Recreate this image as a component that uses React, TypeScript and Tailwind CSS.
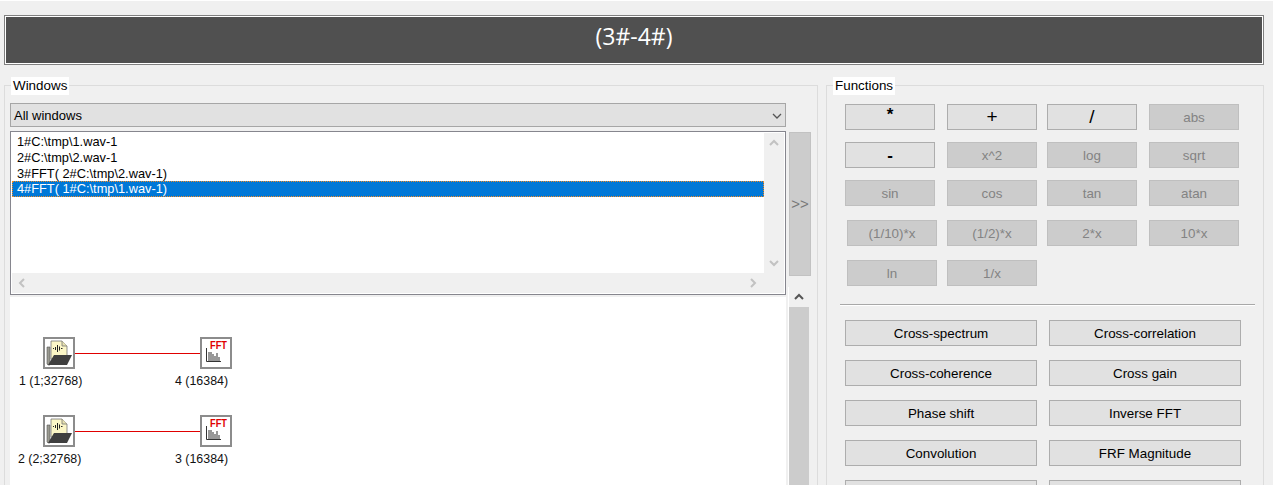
import React from "react";

type Fn = { label: string; on?: boolean; cls?: string; text?: string };

const enabledBtn = "bg-[#e1e1e1] border-[#adadad] text-black";
const disabledBtn = "bg-[#cccccc] border-[#bfbfbf] text-[#838383]";

const fnRows: { cls: string; items: Fn[] }[] = [
  {
    cls: "mt-[18px] ml-[18px]",
    items: [
      { label: "*", on: true, text: "text-[17px] font-bold pb-[4px]" },
      { label: "+", on: true, cls: "ml-[12px]", text: "text-[19px] font-light" },
      { label: "/", on: true, cls: "ml-[10px]", text: "text-[19px] pt-[1px]" },
      { label: "abs", cls: "ml-[12px] pt-[2px]" },
    ],
  },
  {
    cls: "mt-[12px] ml-[18px]",
    items: [
      { label: "-", on: true, text: "text-[17px] font-bold pt-[2px]" },
      { label: "x^2", cls: "ml-[12px] pt-[2px]" },
      { label: "log", cls: "ml-[10px] pt-[2px]" },
      { label: "sqrt", cls: "ml-[12px] pt-[2px]" },
    ],
  },
  {
    cls: "mt-[12px] ml-[18px]",
    items: [
      { label: "sin", cls: "pt-[2px]" },
      { label: "cos", cls: "ml-[12px] pt-[2px]" },
      { label: "tan", cls: "ml-[10px] pt-[2px]" },
      { label: "atan", cls: "ml-[12px] pt-[2px]" },
    ],
  },
  {
    cls: "mt-[14px] ml-[20px]",
    items: [
      { label: "(1/10)*x", cls: "pt-[2px]" },
      { label: "(1/2)*x", cls: "ml-[10px] pt-[2px]" },
      { label: "2*x", cls: "ml-[10px] pt-[2px]" },
      { label: "10*x", cls: "ml-[12px] pt-[2px]" },
    ],
  },
  {
    cls: "mt-[14px] ml-[20px]",
    items: [
      { label: "ln", cls: "pt-[2px]" },
      { label: "1/x", cls: "ml-[10px] pt-[2px]" },
    ],
  },
];

const bigRows = [
  ["Cross-spectrum", "Cross-correlation"],
  ["Cross-coherence", "Cross gain"],
  ["Phase shift", "Inverse FFT"],
  ["Convolution", "FRF Magnitude"],
  ["", ""],
];

const listRows = [
  "1#C:\\tmp\\1.wav-1",
  "2#C:\\tmp\\2.wav-1",
  "3#FFT( 2#C:\\tmp\\2.wav-1)",
  "4#FFT( 1#C:\\tmp\\1.wav-1)",
];

function Chevron({ dir, color = "#c2c2c2", w = 2 }: { dir: "up" | "down" | "left" | "right"; color?: string; w?: number }) {
  const pts = {
    up: "2,8 6,4 10,8",
    down: "2,4 6,8 10,4",
    left: "8,2 4,6 8,10",
    right: "4,2 8,6 4,10",
  }[dir];
  return (
    <svg width="12" height="12" viewBox="0 0 12 12" className="block">
      <polyline points={pts} fill="none" stroke={color} strokeWidth={w} />
    </svg>
  );
}

function FileIcon() {
  return (
    <svg width="28" height="28" viewBox="0 0 28 28" className="block">
      <path d="M2 8h3v18H3L2 25z" fill="#9a9a90" stroke="#555" strokeWidth="0.6" />
      <path d="M6 2h11l5 5v13H6z" fill="#fbf6c6" stroke="#777" strokeWidth="0.8" />
      <path d="M17 2v5h5" fill="#e8e2b0" stroke="#777" strokeWidth="0.8" />
      <path d="M8 9.500h1M10.500 8v3M12.500 6v7M14.500 7.500v4M16 9.500h1.500" stroke="#222" strokeWidth="1" fill="none" />
      <path d="M9 16h18l-5 10H3z" fill="#3f3f3f" />
    </svg>
  );
}

function FftIcon() {
  return (
    <svg width="28" height="28" viewBox="0 0 28 28" className="block">
      <text
        x="8"
        y="10"
        fontFamily="Liberation Sans, sans-serif"
        fontWeight="700"
        fontSize="11"
        textLength="17"
        lengthAdjust="spacingAndGlyphs"
        fill="#e00000"
      >
        FFT
      </text>
      <path d="M4.500 9v13.500H19" fill="none" stroke="#333" strokeWidth="1" />
      <path d="M7 13v9M9 13v9M11 15v7M13 17v5M15 14v8M17 18v4" stroke="#444" strokeWidth="1.100" />
    </svg>
  );
}

function Node({ x, y, children }: { x: number; y: number; children: React.ReactNode }) {
  return (
    <div
      className="absolute flex h-[32px] w-[32px] items-center justify-center border-2 border-[#8c8c8c] bg-white"
      style={{ left: x, top: y }}
    >
      {children}
    </div>
  );
}

function NodeLabel({ x, y, text }: { x: number; y: number; text: string }) {
  return (
    <div className="absolute whitespace-nowrap text-[12.4px] leading-[14px] text-[#111]" style={{ left: x, top: y }}>
      {text}
    </div>
  );
}

function Wire({ y }: { y: number }) {
  return <div className="absolute left-[65px] h-px w-[125px] bg-[#e00000]" style={{ top: y }} />;
}

export default function App() {
  return (
    <div
      className="mt-px h-[484px] w-[1273px] overflow-hidden bg-[#f0f0f0] text-[13.4px] text-black"
      style={{ fontFamily: '"Liberation Sans", Arial, sans-serif' }}
    >
      {/* title bar */}
      <div className="ml-[4px] mt-[14px] h-[50px] w-[1260px] border border-[#808080]">
        <div
          className="flex h-full items-center justify-center border border-white bg-[#505050] pb-[8px] text-[23px] text-white"
          style={{ fontFamily: '"Open Sans", sans-serif' }}
        >
          (3#-4#)
        </div>
      </div>

      <div className="ml-[4px] mt-[20px] flex">
        {/* Windows group */}
        <div className="relative h-[500px] w-[814px] border border-[#dcdcdc] pl-[5px] pt-[17px]">
          <div className="absolute left-[6px] top-[-9px] h-[18px] bg-white px-[2px] leading-[18px]">Windows</div>
          <div className="flex">
            <div className="w-[776px]">
              <div className="flex h-[24px] items-center justify-between border border-[#a6a6a6] bg-[#e1e1e1] pl-[3px] pr-[2px] pt-[1px] text-[13px]">
                <span>All windows</span>
                <Chevron dir="down" color="#555" w={1.3} />
              </div>

              <div className="mt-[4px] h-[164px] border border-[#86868e] bg-white p-px text-[12.8px]">
                <div className="flex h-[140px]">
                  <div className="w-[752px] pt-px leading-[16px]">
                    {listRows.map((row, i) =>
                      i === 3 ? (
                        <div key={row} className="-mt-px h-[16px] border border-dotted border-[#f08a24] bg-[#0078d7] pl-[4px] leading-[14px] text-white">
                          {row}
                        </div>
                      ) : (
                        <div key={row} className="h-[16px] pl-[5px]">
                          {row}
                        </div>
                      )
                    )}
                  </div>
                  <div className="flex w-[20px] flex-col items-center justify-between bg-[#f0f0f0] py-[4px]">
                    <Chevron dir="up" />
                    <Chevron dir="down" />
                  </div>
                </div>
                <div className="flex h-[20px] w-[772px] items-center justify-between bg-[#f0f0f0] pl-[4px] pr-[25px]">
                  <Chevron dir="left" />
                  <Chevron dir="right" />
                </div>
              </div>

              {/* signal diagram */}
              <div className="relative mt-[2px] h-[300px] bg-white">
                <Wire y={56} />
                <Wire y={134} />
                <Node x={33} y={40}>
                  <FileIcon />
                </Node>
                <Node x={190} y={40}>
                  <FftIcon />
                </Node>
                <Node x={33} y={118}>
                  <FileIcon />
                </Node>
                <Node x={190} y={118}>
                  <FftIcon />
                </Node>
                <NodeLabel x={9} y={77} text="1 (1;32768)" />
                <NodeLabel x={165} y={77} text="4 (16384)" />
                <NodeLabel x={8} y={155} text="2 (2;32768)" />
                <NodeLabel x={165} y={155} text="3 (16384)" />
              </div>
            </div>

            <div className="ml-[2px] pt-[29px]">
              <div className="ml-px flex h-[144px] w-[22px] items-center justify-center border border-[#c2c2c2] bg-[#cccccc] text-[15px] text-[#777]">
                &gt;&gt;
              </div>
              <div className="mt-[11px] w-[21px] border-l border-white">
                <div className="flex h-[20px] items-center justify-center">
                  <Chevron dir="up" color="#555" />
                </div>
                <div className="h-[300px] bg-[#cccccc]" />
              </div>
            </div>
          </div>
        </div>

        {/* Functions group */}
        <div className="relative ml-[8px] h-[500px] w-[438px] border border-[#dcdcdc]">
          <div className="absolute left-[6px] top-[-9px] h-[18px] bg-white px-[2px] leading-[18px]">Functions</div>

          {fnRows.map((row, i) => (
            <div key={i} className={`flex ${row.cls}`}>
              {row.items.map((b) => (
                <div
                  key={b.label}
                  className={`flex h-[26px] w-[90px] items-center justify-center border ${b.on ? enabledBtn : disabledBtn} ${b.cls ?? ""} ${b.text ?? ""}`}
                >
                  {b.label}
                </div>
              ))}
            </div>
          ))}

          <div className="ml-[13px] mt-[18px] h-[2px] w-[415px] border-t border-[#a8a8a8] bg-white" />

          <div className="ml-[18px] mt-[14px] flex flex-col gap-[14px]">
            {bigRows.map((row, i) => (
              <div key={i} className="flex gap-[12px]">
                {row.map((label, j) => (
                  <div key={j} className={`flex h-[26px] w-[192px] items-center justify-center border pt-[2px] ${enabledBtn}`}>
                    {label}
                  </div>
                ))}
              </div>
            ))}
          </div>
        </div>
      </div>
    </div>
  );
}
